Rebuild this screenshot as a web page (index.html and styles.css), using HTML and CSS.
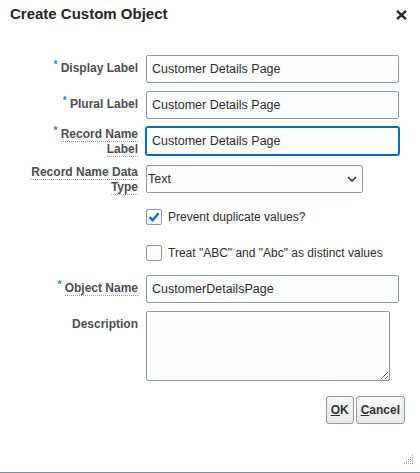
FILE: index.html
```html
<html>
<head>
<meta name="viewport" content="width=device-width, initial-scale=1.0">
<link rel="stylesheet" href="styles.css">
</head>
<body>
<div class="dialog">
    <div class="dlg-header">
        <h1 class="dlg-title">Create Custom Object</h1>
        <span class="dlg-close" title="Close">
            <svg width="11" height="10" viewBox="0 0 11 10"><path d="M1 0.8 L10 9.2 M10 0.8 L1 9.2" stroke="#2b2b2b" stroke-width="2.4" fill="none"/></svg>
        </span>
    </div>

    <form class="dlg-body" onsubmit="return false;">
        <div class="row">
            <label class="lbl"><span class="req">*</span> Display Label</label>
            <input class="txt" type="text" value="Customer Details Page">
        </div>
        <div class="row">
            <label class="lbl"><span class="req">*</span> Plural Label</label>
            <input class="txt" type="text" value="Customer Details Page">
        </div>
        <div class="row">
            <label class="lbl lbl2"><span class="req">*</span> <span class="help">Record Name Label</span></label>
            <input class="txt focused" type="text" value="Customer Details Page">
        </div>
        <div class="row">
            <label class="lbl lbl2"><span class="help">Record Name Data Type</span></label>
            <div class="sel-wrap">
                <select class="sel">
                    <option>Text</option>
                    <option>Automatic Numbering</option>
                </select>
                <svg class="sel-arrow" width="10" height="6" viewBox="0 0 10 6"><path d="M1 1 L5 5 L9 1" stroke="#333" stroke-width="1.6" fill="none"/></svg>
            </div>
        </div>
        <div class="row chk-row">
            <span class="chk">
                <svg width="14" height="14" viewBox="0 0 14 14"><path d="M2.5 7.2 L5.6 10.2 L11.6 3.2" stroke="#0a6fce" stroke-width="2.4" fill="none"/></svg>
            </span>
            <span class="chk-text">Prevent duplicate values?</span>
        </div>
        <div class="row chk-row">
            <span class="chk"></span>
            <span class="chk-text">Treat "ABC" and "Abc" as distinct values</span>
        </div>
        <div class="row">
            <label class="lbl"><span class="req">*</span> <span class="help">Object Name</span></label>
            <input class="txt" type="text" value="CustomerDetailsPage">
        </div>
        <div class="row">
            <label class="lbl">Description</label>
            <textarea class="area"></textarea>
        </div>
        <div class="btn-bar">
            <button class="btn"><u>O</u>K</button>
            <button class="btn"><u>C</u>ancel</button>
        </div>
        <div class="grip-bar">
            <svg width="10" height="10" viewBox="0 0 10 10" fill="#8a959e">
                <rect x="8" y="0" width="1" height="1"/>
                <rect x="6" y="2" width="1" height="1"/><rect x="8" y="2" width="1" height="1"/>
                <rect x="4" y="4" width="1" height="1"/><rect x="6" y="4" width="1" height="1"/><rect x="8" y="4" width="1" height="1"/>
                <rect x="2" y="6" width="1" height="1"/><rect x="4" y="6" width="1" height="1"/><rect x="6" y="6" width="1" height="1"/><rect x="8" y="6" width="1" height="1"/>
                <rect x="0" y="8" width="1" height="1"/><rect x="2" y="8" width="1" height="1"/><rect x="4" y="8" width="1" height="1"/><rect x="6" y="8" width="1" height="1"/><rect x="8" y="8" width="1" height="1"/>
            </svg>
        </div>
    </form>
</div>
</body>
</html>
```

FILE: styles.css
```css
body {
    margin: 0;
    background: #fff;
    font-family: "Liberation Sans", Arial, Helvetica, sans-serif;
}

.dialog {
    width: 420px;
    height: 473px;
    box-sizing: border-box;
    border-bottom: 1px solid #7d8c98;
    background: #fff;
}

.dlg-header {
    display: flex;
    align-items: center;
    justify-content: space-between;
    padding: 5px 13px 0 10px;
}

.dlg-title {
    margin: 0;
    font-size: 15px;
    line-height: 18px;
    font-weight: bold;
    color: #262626;
}

.dlg-close {
    display: flex;
    margin-top: 1px;
}

.dlg-body {
    margin: 0;
    padding-top: 32px;
}

.row {
    display: flex;
    align-items: flex-start;
    gap: 8px;
    margin-bottom: 8px;
}

.lbl {
    width: 138px;
    flex: none;
    box-sizing: border-box;
    padding: 6px 0 0 30px;
    text-align: right;
    font-size: 12px;
    line-height: 15px;
    font-weight: bold;
    color: #4a4e54;
}

.lbl.lbl2 {
    padding-top: 0;
}

.req {
    color: #2a7fd0;
    font-size: 10px;
    line-height: 0;
    vertical-align: 4px;
}

.help {
    border-bottom: 1px dotted #9aa3aa;
}

.txt {
    width: 253px;
    height: 28px;
    box-sizing: border-box;
    margin: 0;
    padding: 0 5px;
    border: 1px solid #8c9aa5;
    border-radius: 2px;
    background: #fcfdfe;
    font-family: "Liberation Sans", Arial, sans-serif;
    font-size: 12.5px;
    color: #2d2d2d;
    outline: none;
}

.txt.focused {
    border-color: #0a6acb;
    box-shadow: 0 0 0 1px #0a6acb;
}

.sel-wrap {
    position: relative;
    width: 217px;
    height: 28px;
}

.sel {
    width: 217px;
    height: 28px;
    box-sizing: border-box;
    margin: 0;
    padding: 0 1px;
    border: 1px solid #8c9aa5;
    border-radius: 2px;
    background: #fcfdfe;
    font-family: "Liberation Sans", Arial, sans-serif;
    font-size: 12.5px;
    color: #2d2d2d;
    appearance: none;
    -webkit-appearance: none;
    outline: none;
}

.sel-arrow {
    position: absolute;
    right: 6px;
    top: 11px;
    pointer-events: none;
}

.chk-row {
    height: 28px;
    align-items: center;
    gap: 6px;
    padding-left: 146px;
}

.chk {
    width: 16px;
    height: 16px;
    box-sizing: border-box;
    border: 1px solid #8c9aa5;
    border-radius: 2px;
    background: #fcfdfe;
    display: flex;
    align-items: center;
    justify-content: center;
}

.chk-text {
    font-size: 12px;
    color: #2d2d2d;
}

.area {
    width: 244px;
    height: 70px;
    box-sizing: border-box;
    margin: 0;
    border: 1px solid #8c9aa5;
    border-radius: 2px;
    background: #fcfdfe;
    resize: both;
    outline: none;
}

.btn-bar {
    display: flex;
    justify-content: flex-end;
    gap: 2px;
    padding-right: 15px;
    margin-top: 15px;
}

.btn {
    height: 28px;
    margin: 0;
    padding: 0 4px;
    border: 1px solid #8c9aa5;
    border-radius: 3px;
    background: linear-gradient(#f7f8f9, #e6eaec);
    font-family: "Liberation Sans", Arial, sans-serif;
    font-size: 12px;
    font-weight: bold;
    color: #333;
}

.grip-bar {
    display: flex;
    justify-content: flex-end;
    padding-right: 6px;
    margin-top: 31px;
}
```
